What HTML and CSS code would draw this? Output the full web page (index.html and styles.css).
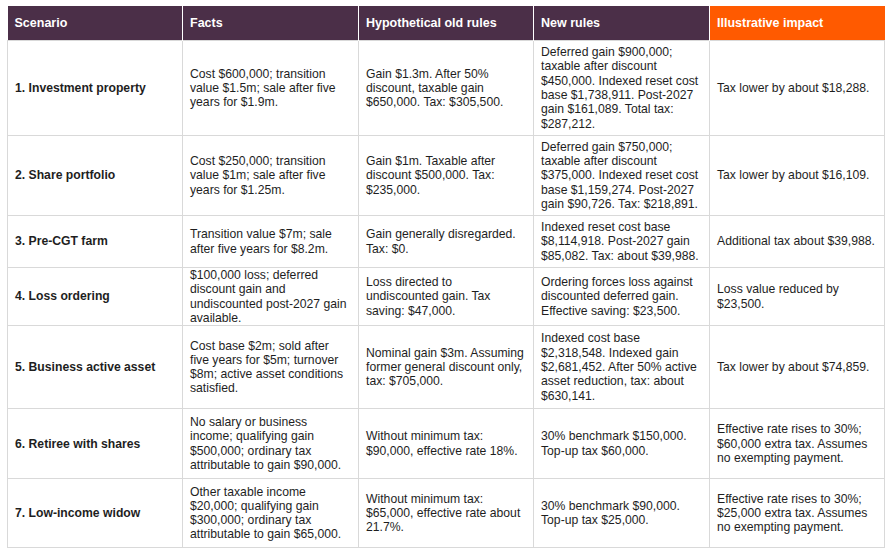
FILE: index.html
```html
<!DOCTYPE html>
<html lang="en">
<head>
<meta charset="utf-8">
<title>Scenario table</title>
<link rel="stylesheet" href="styles.css">
</head>
<body>
<table class="grid">
  <colgroup>
    <col class="c1"><col class="c2"><col class="c3"><col class="c4"><col class="c5">
  </colgroup>
  <thead>
    <tr>
      <th>Scenario</th>
      <th>Facts</th>
      <th>Hypothetical old rules</th>
      <th>New rules</th>
      <th class="accent">Illustrative impact</th>
    </tr>
  </thead>
  <tbody>
    <tr class="r1">
      <td class="name">1. Investment property</td>
      <td>Cost $600,000; transition<br>value $1.5m; sale after five<br>years for $1.9m.</td>
      <td>Gain $1.3m. After 50%<br>discount, taxable gain<br>$650,000. Tax: $305,500.</td>
      <td>Deferred gain $900,000;<br>taxable after discount<br>$450,000. Indexed reset cost<br>base $1,738,911. Post-2027<br>gain $161,089. Total tax:<br>$287,212.</td>
      <td>Tax lower by about $18,288.</td>
    </tr>
    <tr class="r2">
      <td class="name">2. Share portfolio</td>
      <td>Cost $250,000; transition<br>value $1m; sale after five<br>years for $1.25m.</td>
      <td>Gain $1m. Taxable after<br>discount $500,000. Tax:<br>$235,000.</td>
      <td>Deferred gain $750,000;<br>taxable after discount<br>$375,000. Indexed reset cost<br>base $1,159,274. Post-2027<br>gain $90,726. Tax: $218,891.</td>
      <td>Tax lower by about $16,109.</td>
    </tr>
    <tr class="r3">
      <td class="name">3. Pre-CGT farm</td>
      <td>Transition value $7m; sale<br>after five years for $8.2m.</td>
      <td>Gain generally disregarded.<br>Tax: $0.</td>
      <td>Indexed reset cost base<br>$8,114,918. Post-2027 gain<br>$85,082. Tax: about $39,988.</td>
      <td>Additional tax about $39,988.</td>
    </tr>
    <tr class="r4">
      <td class="name">4. Loss ordering</td>
      <td>$100,000 loss; deferred<br>discount gain and<br>undiscounted post-2027 gain<br>available.</td>
      <td>Loss directed to<br>undiscounted gain. Tax<br>saving: $47,000.</td>
      <td>Ordering forces loss against<br>discounted deferred gain.<br>Effective saving: $23,500.</td>
      <td>Loss value reduced by<br>$23,500.</td>
    </tr>
    <tr class="r5">
      <td class="name">5. Business active asset</td>
      <td>Cost base $2m; sold after<br>five years for $5m; turnover<br>$8m; active asset conditions<br>satisfied.</td>
      <td>Nominal gain $3m. Assuming<br>former general discount only,<br>tax: $705,000.</td>
      <td>Indexed cost base<br>$2,318,548. Indexed gain<br>$2,681,452. After 50% active<br>asset reduction, tax: about<br>$630,141.</td>
      <td>Tax lower by about $74,859.</td>
    </tr>
    <tr class="r6">
      <td class="name">6. Retiree with shares</td>
      <td>No salary or business<br>income; qualifying gain<br>$500,000; ordinary tax<br>attributable to gain $90,000.</td>
      <td>Without minimum tax:<br>$90,000, effective rate 18%.</td>
      <td>30% benchmark $150,000.<br>Top-up tax $60,000.</td>
      <td>Effective rate rises to 30%;<br>$60,000 extra tax. Assumes<br>no exempting payment.</td>
    </tr>
    <tr class="r7">
      <td class="name">7. Low-income widow</td>
      <td>Other taxable income<br>$20,000; qualifying gain<br>$300,000; ordinary tax<br>attributable to gain $65,000.</td>
      <td>Without minimum tax:<br>$65,000, effective rate about<br>21.7%.</td>
      <td>30% benchmark $90,000.<br>Top-up tax $25,000.</td>
      <td>Effective rate rises to 30%;<br>$25,000 extra tax. Assumes<br>no exempting payment.</td>
    </tr>
  </tbody>
</table>
</body>
</html>
```
FILE: styles.css
```css
html, body {
  margin: 0;
  padding: 0;
  background: #ffffff;
}

body {
  padding: 6px 0 0 7px;
  font-family: "Liberation Sans", Arial, sans-serif;
  font-size: 12.2px;
  color: #1e1e1e;
}

.grid {
  border-collapse: collapse;
  table-layout: fixed;
  width: 877px;
}

.c1 { width: 175px; }
.c2 { width: 176px; }
.c3 { width: 175px; }
.c4 { width: 176px; }
.c5 { width: 175px; }

.grid th {
  height: 34px;
  padding: 0 7px;
  background: #4b2f48;
  color: #ffffff;
  font-weight: bold;
  font-size: 12.5px;
  text-align: left;
  vertical-align: middle;
  border-left: 1px solid #ffffff;
  border-right: 1px solid #ffffff;
  border-top: 0;
  border-bottom: 0;
}

.grid th:first-child {
  border-left: 0;
}

.grid th:last-child {
  border-right: 0;
}

.grid th.accent {
  background: #ff5a00;
}

.grid td {
  padding: 0 7px;
  border: 1px solid #d9d9d9;
  line-height: 14.3px;
  vertical-align: middle;
  text-align: left;
  white-space: nowrap;
}

.grid td.name {
  font-weight: bold;
}

.r1 td { height: 94px; }
.r2 td { height: 79px; }
.r3 td { height: 51px; }
.r4 td { height: 56px; }
.r5 td { height: 82px; }
.r6 td { height: 69px; }
.r7 td { height: 68px; }
```
